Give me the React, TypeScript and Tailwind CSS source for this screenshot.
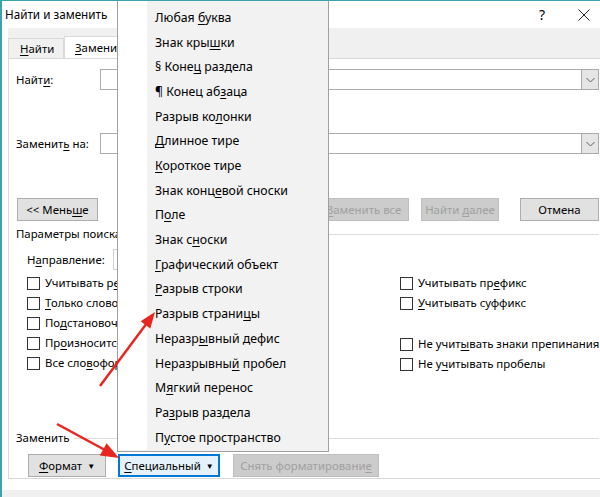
import React from "react";

const U = ({ children }: { children: React.ReactNode }) => (
  <span className="underline decoration-1 underline-offset-[2px]">{children}</span>
);

const Check = ({ children }: { children: React.ReactNode }) => (
  <div className="flex h-[20px] items-center">
    <div className="h-[13px] w-[13px] shrink-0 border border-[#333333] bg-white" />
    <span className="ml-[5px] whitespace-nowrap">{children}</span>
  </div>
);

const Combo = () => (
  <div className="flex h-[21px] w-[499px] border border-[#ababab] bg-white">
    <div className="flex-1" />
    <div className="flex w-[17px] items-center justify-center border-l border-[#ababab] bg-[#e5e5e5]">
      <svg width="9" height="6" viewBox="0 0 9 6">
        <path d="M0.5 1 L4.5 5 L8.5 1" fill="none" stroke="#606060" strokeWidth="1" />
      </svg>
    </div>
  </div>
);

const menuItems: React.ReactNode[] = [
  <>Любая ц<U>и</U>фра</>,
  <>Любая <U>б</U>уква</>,
  <>Знак кры<U>ш</U>ки</>,
  <>§ Коне<U>ц</U> раздела</>,
  <>¶ Конец аб<U>з</U>аца</>,
  <>Разрыв ко<U>л</U>онки</>,
  <><U>Д</U>линное тире</>,
  <><U>К</U>ороткое тире</>,
  <>Знак конц<U>е</U>вой сноски</>,
  <>П<U>о</U>ле</>,
  <>Знак с<U>н</U>оски</>,
  <><U>Г</U>рафический объект</>,
  <><U>Р</U>азрыв строки</>,
  <>Разрыв страни<U>ц</U>ы</>,
  <>Неразр<U>ы</U>вный дефис</>,
  <>Неразрывны<U>й</U> пробел</>,
  <>М<U>я</U>гкий перенос</>,
  <>Ра<U>з</U>рыв раздела</>,
  <>П<U>у</U>стое пространство</>,
];

export default function App() {
  return (
    <div className="relative h-[497px] w-[600px] overflow-hidden border-l-2 border-t border-[#3aa3ad] bg-white font-['Noto_Sans',sans-serif] text-[11.4px] leading-none text-black">
      {/* title bar */}
      <div className="flex h-[27px] items-center pl-[3px] text-[11.7px]">
        <span>Найти и заменить</span>
        <div className="flex-1" />
        <span className="mr-[33px] text-[14px]">?</span>
        <svg width="12" height="12" viewBox="0 0 12 12" className="mr-[10px]">
          <path d="M0.5 0.5 L11.5 11.5 M11.5 0.5 L0.5 11.5" stroke="#222" strokeWidth="1" />
        </svg>
      </div>

      {/* tab strip */}
      <div className="ml-[6px] flex h-[30px] items-end bg-[#f0f0f0]">
        <div className="flex h-[20px] w-[56px] items-center border border-b-0 border-[#d9d9d9] bg-[#f0f0f0] pl-[11px]">
          <span><U>Н</U>айти</span>
        </div>
        <div className="flex h-[22px] w-[80px] items-center border border-b-0 border-[#d9d9d9] bg-white pl-[10px]">
          <span><U>З</U>аменить</span>
        </div>
      </div>

      {/* tab page */}
      <div className="ml-[6px] flex h-[421px] w-[600px] flex-col border border-[#d9d9d9] pl-[7px] pr-[8px]">
        <div className="mt-[10px] flex items-center">
          <span className="w-[84px]">Найт<U>и</U>:</span>
          <Combo />
        </div>
        <div className="mt-[43px] flex items-center">
          <span className="w-[84px]">Заменит<U>ь</U> на:</span>
          <Combo />
        </div>

        <div className="mt-[44px] flex h-[23px] items-center">
          <div className="ml-[1px] flex h-[23px] w-[81px] items-center justify-center border border-[#adadad] bg-[#e1e1e1]">
            <span>&lt;&lt; Мень<U>ш</U>е</span>
          </div>
          <div className="flex-1" />
          <div className="flex h-[23px] w-[90px] items-center justify-center border border-[#bfbfbf] bg-[#cccccc] text-[#a0a0a0]">
            <span><U>З</U>аменить все</span>
          </div>
          <div className="ml-[12px] flex h-[23px] w-[78px] items-center justify-center border border-[#bfbfbf] bg-[#cccccc] text-[#a0a0a0]">
            <span>Найти <U>д</U>алее</span>
          </div>
          <div className="ml-[21px] flex h-[23px] w-[79px] items-center justify-center border border-[#adadad] bg-[#e1e1e1]">
            <span>Отмена</span>
          </div>
        </div>

        <div className="mt-[6px] flex h-[14px] items-center">
          <span className="whitespace-nowrap">Параметры поиска</span>
          <div className="ml-[4px] h-px flex-1 bg-[#dcdcdc]" />
        </div>

        <div className="mt-[8px] flex h-[21px] items-center pl-[11px]">
          <span className="w-[86px]">Н<U>а</U>правление:</span>
          <div className="h-[21px] w-[100px] border border-[#d0d0d0] bg-white" />
        </div>

        <div className="mt-[3px] grid grid-cols-[373px_1fr] pl-[11px]">
          <div className="flex flex-col">
            <Check>Учитывать р<U>е</U>гистр</Check>
            <Check><U>Т</U>олько слово целиком</Check>
            <Check>По<U>д</U>становочные знаки</Check>
            <Check>Пр<U>о</U>износится как</Check>
            <Check>Все сло<U>в</U>оформы</Check>
          </div>
          <div className="flex flex-col">
            <Check>Учитывать пр<U>е</U>фикс</Check>
            <Check><U>У</U>читывать суффикс</Check>
            <div className="h-[21px]" />
            <Check>Не учит<U>ы</U>вать знаки препинания</Check>
            <Check>Не у<U>ч</U>итывать пробелы</Check>
          </div>
        </div>

        <div className="mt-[57px] flex h-[14px] items-center">
          <span>Заменить</span>
          <div className="ml-[4px] h-px flex-1 bg-[#dcdcdc]" />
        </div>

        <div className="mt-[9px] flex h-[23px] items-center pl-[12px]">
          <div className="flex h-[23px] w-[78px] items-center justify-center border border-[#adadad] bg-[#e1e1e1]">
            <span><U>Ф</U>ормат</span>
            <span className="ml-[5px] text-[8px]">▼</span>
          </div>
          <div className="ml-[12px] flex h-[23px] w-[102px] items-center justify-center border-2 border-[#0078d7] bg-[#e5f1fb]">
            <span><U>С</U>пециальный</span>
            <span className="ml-[5px] text-[8px]">▼</span>
          </div>
          <div className="ml-[13px] flex h-[23px] w-[146px] items-center justify-center border border-[#bfbfbf] bg-[#cccccc] text-[#a0a0a0]">
            <span>Снять форматировани<U>е</U></span>
          </div>
        </div>
      </div>

      <div className="mt-[11px] h-[10px] bg-[#f0f0f0]" />

      {/* dropdown menu */}
      <div className="absolute left-[115px] top-[-22px] flex w-[212px] border border-[#a0a0a0] bg-[#f2f2f2] py-[1px] text-[12.3px]">
        <div className="w-[29px] shrink-0 bg-white" />
        <div className="flex flex-1 flex-col">
          {menuItems.map((it, i) => (
            <div key={i} className="flex h-[24.7px] items-center whitespace-nowrap pl-[8px]">
              <span>{it}</span>
            </div>
          ))}
        </div>
      </div>

      {/* red arrows */}
      <svg className="pointer-events-none absolute left-[-2px] top-[-1px]" width="600" height="497" viewBox="0 0 600 497">
        <line x1="100" y1="386" x2="147" y2="323" stroke="#e8261f" strokeWidth="2.5" />
        <polygon points="155,312 150.3,328.4 140.6,321.2" fill="#e8261f" />
        <line x1="57" y1="424" x2="105" y2="450" stroke="#e8261f" strokeWidth="2.5" />
        <polygon points="119,458 99.8,455.5 106.6,443.2" fill="#e8261f" />
      </svg>
    </div>
  );
}
